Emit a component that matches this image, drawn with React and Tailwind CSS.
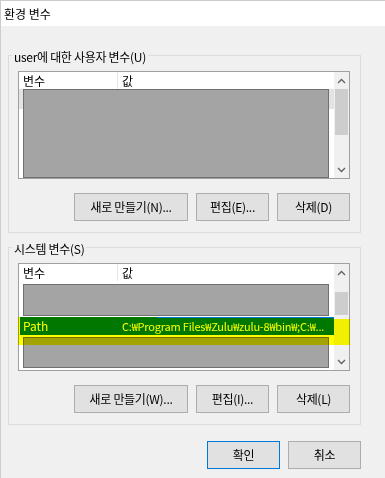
import React from 'react'

const font = { fontFamily: '"Noto Sans CJK KR", "Noto Sans", sans-serif' }

function Chevron({ up }) {
    return (
        <svg width="9" height="6" viewBox="0 0 9 6" className="text-[#606060]">
            <path d={up ? 'M1 5 L4.5 1.5 L8 5' : 'M1 1 L4.5 4.5 L8 1'} fill="none" stroke="currentColor" strokeWidth="1.3" />
        </svg>
    )
}

function Scrollbar({ thumbTop, thumbHeight }) {
    return (
        <div className="w-[15px] flex flex-col bg-[#f0f0f0]">
            <div className="h-[17px] flex items-center justify-center"><Chevron up /></div>
            <div className="flex-1">
                <div className="bg-[#cdcdcd] ml-[1px] w-[13px]" style={{ marginTop: thumbTop, height: thumbHeight }} />
            </div>
            <div className="h-[17px] flex items-center justify-center"><Chevron /></div>
        </div>
    )
}

function Header() {
    return (
        <div className="h-[17px] flex items-center text-[12px] text-black leading-none">
            <div className="w-[99px] h-full pl-[4px] flex items-center border-r border-[#e5e5e5]">변수</div>
            <div className="pl-[4px]">값</div>
        </div>
    )
}

function Btn({ children, w, primary }) {
    return (
        <div className={`h-[28px] flex items-center justify-center text-[12px] tracking-[-0.3px] text-black bg-[#e1e1e1] border ${primary ? 'border-[#0078d7]' : 'border-[#adadad]'}`} style={{ width: w }}>
            {children}
        </div>
    )
}

function Group({ label, children }) {
    return (
        <div className="w-[353px] h-[178px] border border-[#dcdcdc] flex flex-col">
            <div className="-mt-[8px] ml-[3px] px-[2px] w-fit h-[17px] leading-[17px] text-[12px] tracking-[-0.3px] text-black bg-[#f0f0f0]">{label}</div>
            {children}
        </div>
    )
}

export default function App() {
    return (
        <div className="w-[385px] h-[478px] bg-[#f0f0f0] border-t border-l border-[#cccccc] flex flex-col overflow-hidden" style={font}>
            <div className="h-[25px] bg-white flex items-center pl-[3px] text-[12px] text-black">환경 변수</div>

            <div className="ml-[7px] mt-[29px]">
                <Group label="user에 대한 사용자 변수(U)">
                    <div className="ml-[9px] mt-[6px] w-[332px] h-[108px] border border-[#a0a0a0] bg-white flex">
                        <div className="w-[315px] flex flex-col">
                            <Header />
                            <div className="relative flex-1">
                                <div className="h-[20px] bg-[#e3e3e3]" />
                                <div className="absolute top-0 left-[4px] w-[306px] h-[89px] bg-[#a4a4a4] border border-[#707070]" />
                            </div>
                        </div>
                        <Scrollbar thumbTop={0} thumbHeight={46} />
                    </div>
                    <div className="mt-[14px] pr-[10px] flex justify-end gap-[8px]">
                        <Btn w={114}>새로 만들기(N)...</Btn>
                        <Btn w={73}>편집(E)...</Btn>
                        <Btn w={73}>삭제(D)</Btn>
                    </div>
                </Group>
            </div>

            <div className="ml-[7px] mt-[14px]">
                <Group label="시스템 변수(S)">
                    <div className="relative ml-[9px] mt-[6px] w-[332px] h-[108px] border border-[#a0a0a0] bg-white flex">
                        <div className="w-[315px] flex flex-col">
                            <Header />
                            <div className="flex-1 flex flex-col">
                                <div className="mt-[3px] ml-[4px] w-[306px] h-[32px] bg-[#a4a4a4] border border-[#707070]" />
                                <div className="mt-[1px] ml-[1px] w-[314px] h-[18px] bg-[#0078d7] text-white text-[11px] flex items-center whitespace-nowrap overflow-hidden">
                                    <span className="w-[102px] pl-[3px] shrink-0 text-[12px]">Path</span>
                                    <span className="tracking-[-0.2px]">C:₩Program Files₩Zulu₩zulu-8₩bin₩;C:₩...</span>
                                </div>
                                <div className="mt-[2px] ml-[4px] w-[306px] h-[31px] bg-[#a4a4a4] border border-[#707070]" />
                            </div>
                        </div>
                        <Scrollbar thumbTop={11} thumbHeight={23} />
                        <div className="absolute left-[-1px] top-[53px] w-[139px] h-[28px] bg-[#ffff00] mix-blend-multiply" />
                        <div className="absolute left-[138px] top-[54px] w-[176px] h-[27px] bg-[#ffff00] mix-blend-multiply" />
                        <div className="absolute left-[314px] top-[55px] w-[17px] h-[26px] bg-[#ffff00] mix-blend-multiply" />
                    </div>
                    <div className="mt-[14px] pr-[10px] flex justify-end gap-[8px]">
                        <Btn w={114}>새로 만들기(W)...</Btn>
                        <Btn w={73}>편집(I)...</Btn>
                        <Btn w={73}>삭제(L)</Btn>
                    </div>
                </Group>
            </div>

            <div className="ml-[7px] w-[353px] mt-[16px] flex justify-end gap-[8px]">
                <Btn w={73} primary>확인</Btn>
                <Btn w={73}>취소</Btn>
            </div>
        </div>
    )
}
